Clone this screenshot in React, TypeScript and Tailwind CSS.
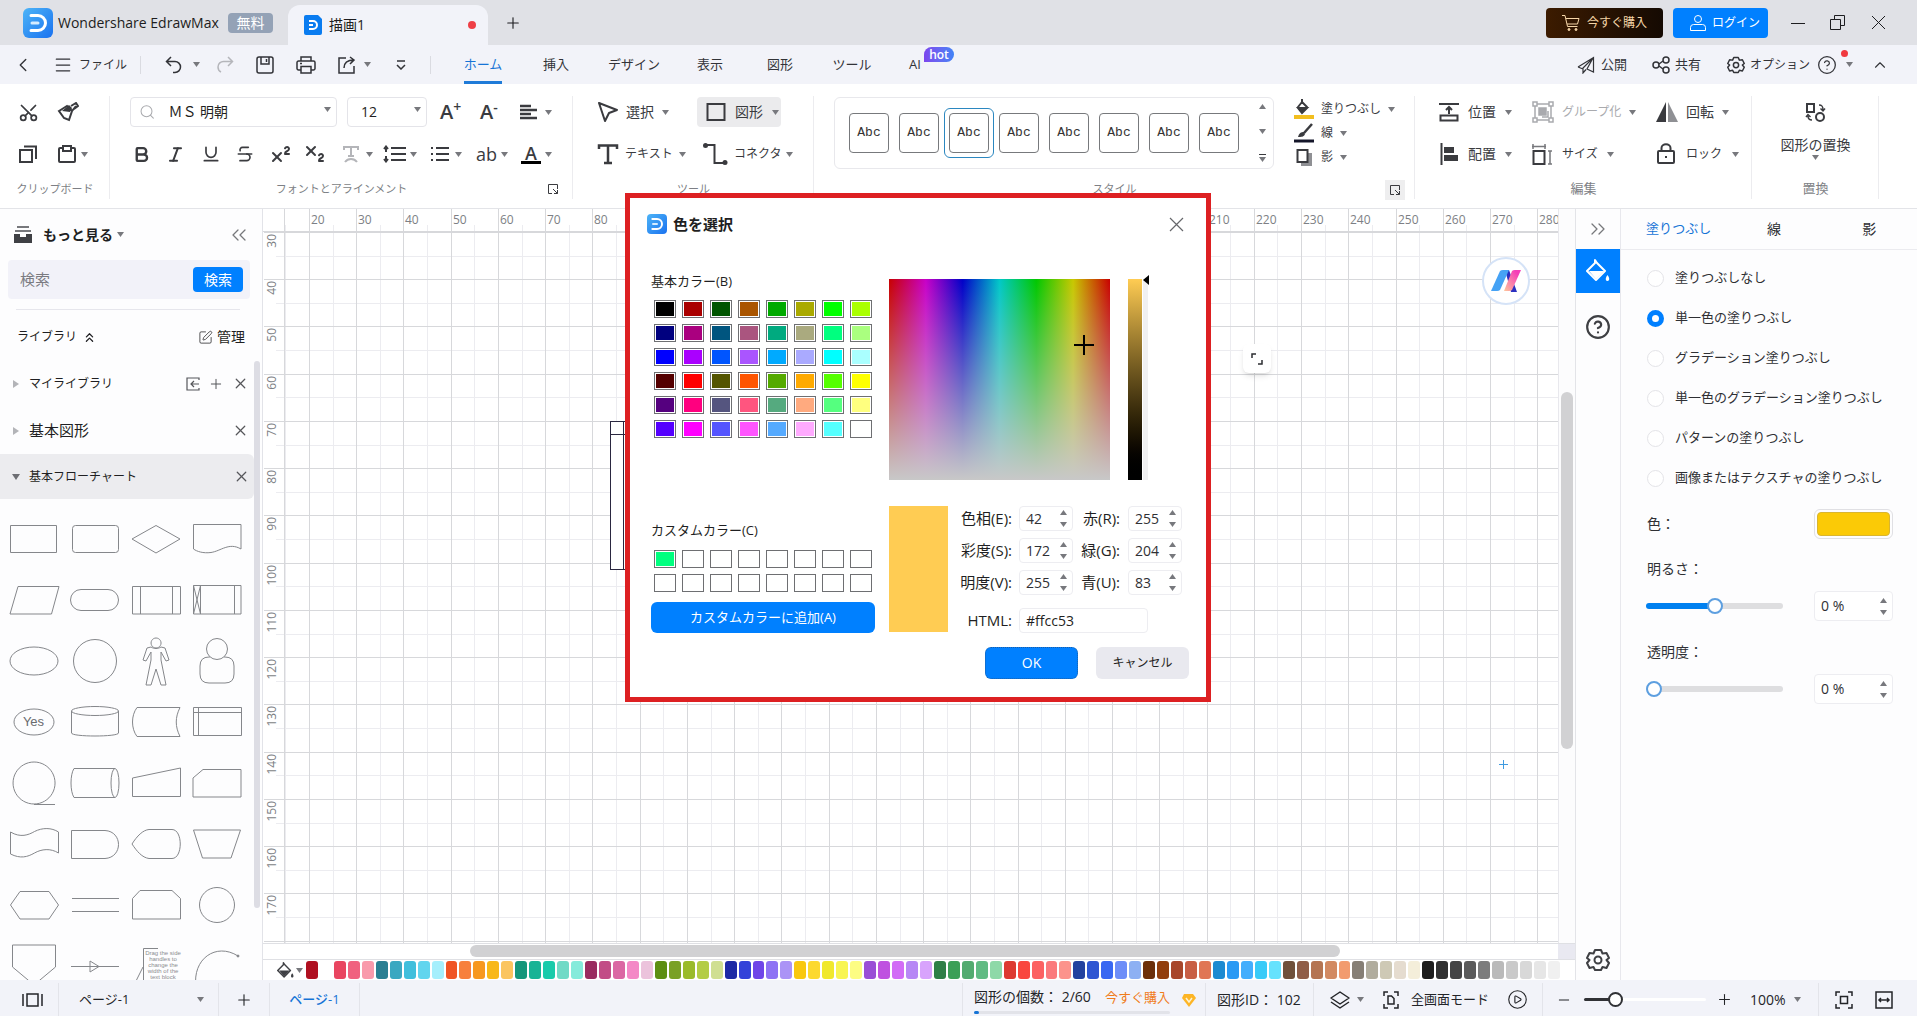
import React, { useState } from 'react';
import {
  Bold,
  Italic,
  Underline,
  Strikethrough,
  Superscript,
  Subscript,
  Scissors,
  Type,
  Minus,
  Plus,
  X,
  ChevronLeft,
  ChevronUp,
  ChevronsLeft,
  ChevronsRight,
  ChevronsUp,
  Menu,
  CircleHelp,
  CirclePlay,
  Search,
  SquarePen,
} from 'lucide-react';

const BASIC_COLORS = [
  '#000000', '#aa0000', '#005500', '#aa5500', '#00aa00', '#aaaa00', '#00ff00', '#aaff00',
  '#00007f', '#aa007f', '#00557f', '#aa557f', '#00aa7f', '#aaaa7f', '#00ff7f', '#aaff7f',
  '#0000ff', '#aa00ff', '#0055ff', '#aa55ff', '#00aaff', '#aaaaff', '#00ffff', '#aaffff',
  '#550000', '#ff0000', '#555500', '#ff5500', '#55aa00', '#ffaa00', '#55ff00', '#ffff00',
  '#55007f', '#ff007f', '#55557f', '#ff557f', '#55aa7f', '#ffaa7f', '#55ff7f', '#ffff7f',
  '#5500ff', '#ff00ff', '#5555ff', '#ff55ff', '#55aaff', '#ffaaff', '#55ffff', '#ffffff',
];

const CUSTOM_COLORS = ['#00ff7f', ...Array(15).fill('#ffffff')];

const PALETTE = [
  '#b01020', '#ffffff', '#e94560', '#f0627f', '#f99aab',
  '#2a7f92', '#3aa8c1', '#3fbfdc', '#62d5ee', '#a5effc',
  '#f05423', '#f7803c', '#f79820', '#f8b818', '#fbc55f',
  '#14977b', '#17b395', '#19cbaa', '#70dac6', '#85ebdb',
  '#992c60', '#c24c86', '#db67a3', '#f488c6', '#ecc3dc',
  '#5d8e12', '#7aa125', '#9abb2a', '#b3cd45', '#d0df91',
  '#1d2aa5', '#3342d9', '#6f45e8', '#8e72f4', '#ab93f6',
  '#f9c80e', '#fcd92e', '#f0e82c', '#f8f552', '#fdfd83',
  '#9a4fd6', '#bf52e0', '#d26cf6', '#b788f5', '#d8a3fc',
  '#2f8047', '#3c9f57', '#53ab6f', '#61bb83', '#8ed9a8',
  '#dd3a31', '#f9473e', '#fc6262', '#fb7a7c', '#fc938c',
  '#24429f', '#2f56d2', '#3867f2', '#6c8df8', '#8db0f3',
  '#6c2f09', '#923e0b', '#a8472a', '#c85f44', '#e07655',
  '#1d8ad1', '#2a9af4', '#44aefc', '#39cbf8', '#65e2fd',
  '#70503a', '#8f5d47', '#b57552', '#d28a62', '#f29b6e',
  '#867f75', '#b1ad9e', '#cec9b5', '#e5dccf', '#f4eeda',
  '#1c1c1c', '#303030', '#444444', '#5b5b5b', '#7c7c7c',
  '#bababa', '#cacaca', '#d8d8d8', '#e6e6e6', '#f0f0f0',
];

const FILL_MODES = [
  '塗りつぶしなし',
  '単一色の塗りつぶし',
  'グラデーション塗りつぶし',
  '単一色のグラデーション塗りつぶし',
  'パターンの塗りつぶし',
  '画像またはテクスチャの塗りつぶし',
];

interface IconProps {
  w?: number;
  h?: number;
  stroke?: number;
  children: React.ReactNode;
}

const Icon: React.FC<IconProps> = ({ w = 20, h = 20, stroke = 2, children }) => (
  <svg
    width={w}
    height={h}
    viewBox={`0 0 ${w} ${h}`}
    fill="none"
    stroke="currentColor"
    strokeWidth={stroke}
    className="shrink-0"
    aria-hidden="true"
  >
    {children}
  </svg>
);

const Caret = () => (
  <svg width="7" height="5" viewBox="0 0 7 5" className="shrink-0" aria-hidden="true">
    <path d="M0 0h7L3.500 5z" fill="#77787d" />
  </svg>
);

const CaretUp = () => (
  <svg width="7" height="5" viewBox="0 0 7 5" className="shrink-0" aria-hidden="true">
    <path d="M0 5h7L3.500 0z" fill="#77787d" />
  </svg>
);

const Logo = ({ size }: { size: number }) => (
  <svg width={size} height={size} viewBox="0 0 30 30" className="shrink-0" aria-hidden="true">
    <defs>
      <linearGradient id={`logo${size}`} x1="0" y1="0" x2="1" y2="1">
        <stop offset="0" stopColor="#4db4f7" />
        <stop offset="1" stopColor="#1a72f0" />
      </linearGradient>
    </defs>
    <rect width="30" height="30" rx="6" fill={`url(#logo${size})`} />
    <path d="M8 7.500h7a7.500 7.500 0 0 1 0 15H8" fill="none" stroke="#fff" strokeWidth="3" strokeLinecap="round" />
    <path d="M9 15h6" stroke="#d5ecff" strokeWidth="3" strokeLinecap="round" />
  </svg>
);

const Bucket = ({ size = 20 }: { size?: number }) => (
  <svg width={size} height={size} viewBox="0 0 24 24" className="shrink-0" aria-hidden="true">
    <path d="M9 1l2 3 8 8-9 9-9-9 8-8z" fill="none" stroke="currentColor" strokeWidth="2" strokeLinejoin="round" />
    <path d="M3 12h15l-8 8z" fill="currentColor" />
    <path d="M21.500 16c3 4 1.500 6 0 6s-3-2 0-6z" fill="currentColor" />
  </svg>
);

const Gear = ({ size }: { size: number }) => (
  <svg width={size} height={size} viewBox="0 0 24 24" fill="none" stroke="currentColor" strokeWidth="2" strokeLinejoin="round" className="shrink-0" aria-hidden="true">
    <path d="M9 2h6l1.500 3.500 4-.5 2.500 5-2.500 2 2.500 3-2.500 5-4-1L15 22H9l-1.500-3-4 1L1 15l2.500-3L1 10l2.500-5 4 .5z" />
    <circle cx="12" cy="12" r="3.500" />
  </svg>
);

const Launcher = () => (
  <Icon w={12} h={12} stroke={1}>
    <path d="M5 10.500H1.500v-9h9V6M6 6l4.500 4.500M10.500 7v3.500H7" />
  </Icon>
);

/* ---------- title + menu bars ---------- */

const TitleBar = () => (
  <header className="flex h-[45px] shrink-0 items-center bg-[#e0e1e6] text-[#1d1d20]">
    <div className="flex w-[288px] items-center pl-[23px]">
      <Logo size={30} />
      <span className="ml-[5px] w-[170px] whitespace-nowrap text-sm">Wondershare EdrawMax</span>
      <span className="flex h-5 w-[45px] items-center justify-center rounded bg-[#94a2b6] text-sm text-white">無料</span>
    </div>
    <div className="flex h-10 w-[200px] items-center self-end rounded-t-xl bg-[#f2f3f9] pl-4">
      <svg width="18" height="20" viewBox="0 0 18 20" aria-hidden="true">
        <path d="M2 0h12l4 4v14q0 2-2 2H2q-2 0-2-2V2q0-2 2-2z" fill="#0a7cf0" />
        <path d="M5 6h4a4 4 0 0 1 0 8H5M5 10h4" fill="none" stroke="#fff" strokeWidth="2" />
      </svg>
      <span className="ml-[7px] text-sm">描画1</span>
      <span className="ml-auto mr-3 h-2 w-2 rounded-full bg-[#ee3f46]" />
    </div>
    <button aria-label="新しいタブ" className="ml-4">
      <Plus size={18} strokeWidth={1.5} />
    </button>
    <button className="ml-auto flex h-[30px] w-[117px] items-center gap-[6px] rounded bg-gradient-to-r from-[#3c1b00] to-[#150a02] pl-[15px] text-xs text-[#f6d6a8]">
      <Icon stroke={1}>
        <path d="M1 2.500h3l2.500 11h10M5 5.500h13l-1.500 5.500H6" />
        <circle cx="8" cy="16.500" r="1" fill="currentColor" />
        <circle cx="15" cy="16.500" r="1" fill="currentColor" />
      </Icon>
      今すぐ購入
    </button>
    <button className="ml-[10px] flex h-[30px] w-[95px] items-center gap-[5px] rounded bg-[#0080ff] pl-4 text-xs text-white">
      <Icon w={18} h={18} stroke={1}>
        <circle cx="9" cy="5" r="3.500" />
        <path d="M1.500 16.500v-3a3 3 0 0 1 3-3h9a3 3 0 0 1 3 3v3z" />
      </Icon>
      ログイン
    </button>
    <div className="flex w-[149px] items-center pl-[22px]">
      <button aria-label="最小化" className="w-[39px]">
        <Icon w={16} h={16} stroke={1}><path d="M1 8.500h14" /></Icon>
      </button>
      <button aria-label="元に戻す" className="w-[42px]">
        <Icon w={17} h={17} stroke={1}><path d="M1.500 5.500h10v10h-10zM5.500 5V1.500h10v10H12" /></Icon>
      </button>
      <button aria-label="閉じる">
        <Icon w={15} h={15} stroke={1}><path d="M1 1l13 13M14 1L1 14" /></Icon>
      </button>
    </div>
  </header>
);

const MenuTab = ({ label, className, active }: { label: string; className: string; active?: boolean }) => (
  <button className={`flex h-full items-center justify-center ${className}`}>
    <span className={active ? 'flex h-full items-center border-b-[3px] border-[#1f7bd8] pt-[3px] text-[#1674d6]' : ''}>{label}</span>
  </button>
);

const MenuBar = () => (
  <nav className="flex h-[39px] shrink-0 items-center bg-[#f2f3f9] text-[13px] text-[#323338]">
    <button aria-label="戻る" className="w-[53px] pl-3">
      <ChevronLeft size={22} strokeWidth={1.5} />
    </button>
    <button className="flex w-[87px] items-center gap-[6px] text-xs">
      <Menu size={20} strokeWidth={1.5} />
      ファイル
    </button>
    <div className="flex h-[18px] w-[291px] items-center border-x border-[#dadbe1] pl-6">
      <button aria-label="元に戻す操作" className="flex w-[51px] items-center gap-[10px]">
        <Icon w={18} h={18} stroke={1.500}><path d="M6 1L1.500 5.500 6 10M2 5.500h8a5.500 5.500 0 0 1 0 11H8" /></Icon>
        <Caret />
      </button>
      <button aria-label="やり直し" className="w-10 text-[#b5b6bb]">
        <Icon w={18} h={18} stroke={1.500}><path d="M12 1l4.500 4.500L12 10M16 5.500H8a5.500 5.500 0 0 0-6 5.500c0 2 1 4 3 5" /></Icon>
      </button>
      <button aria-label="保存" className="w-10">
        <Icon w={18} h={18} stroke={1.500}>
          <rect x="1" y="1" width="16" height="16" rx="2" />
          <path d="M5 1v7h8V1M10.500 3v3" />
        </Icon>
      </button>
      <button aria-label="印刷" className="w-[42px]">
        <Icon w={20} h={18} stroke={1.500}>
          <path d="M5 5V1h10v4M5 14H2.500A1.500 1.500 0 0 1 1 12.500v-6A1.500 1.500 0 0 1 2.500 5h15A1.500 1.500 0 0 1 19 6.500v6a1.500 1.500 0 0 1-1.500 1.500H15M5 10.500h10V17H5zM4 7.500h2" />
        </Icon>
      </button>
      <button aria-label="エクスポート" className="flex w-[58px] items-center gap-2">
        <Icon w={18} h={18} stroke={1.500}><path d="M8 2H1v15h15v-7M6 12c0-5 3-8 10-8M12 1l4 3-4 4" /></Icon>
        <Caret />
      </button>
      <button aria-label="クイックアクセス">
        <Icon w={10} h={10} stroke={1.500}><path d="M1 1h8M1 5l4 4 4-4" /></Icon>
      </button>
    </div>
    <div className="flex h-full items-center pl-[19px]">
      <MenuTab label="ホーム" className="w-[66px]" active />
      <MenuTab label="挿入" className="w-20" />
      <MenuTab label="デザイン" className="w-[76px]" />
      <MenuTab label="表示" className="w-[76px]" />
      <MenuTab label="図形" className="w-16" />
      <MenuTab label="ツール" className="w-20" />
      <div className="relative h-full">
        <MenuTab label="AI" className="w-[46px]" />
        <span className="absolute left-8 top-[2px] flex h-[15px] w-[30px] items-center justify-center rounded-full rounded-bl-none bg-gradient-to-r from-[#7b45ee] to-[#3f83f6] text-xs font-semibold leading-none text-white">hot</span>
      </div>
    </div>
    <div className="ml-auto flex w-[340px] items-center">
      <button className="flex w-[75px] items-center gap-[6px]">
        <Icon w={18} h={18} stroke={1.200}><path d="M1 11L16.500 1.500V16L10 13 16 2 6 12v5l3-3.500M1 11l5 2" /></Icon>
        公開
      </button>
      <button className="flex w-[75px] items-center gap-[5px]">
        <Icon w={18} h={18} stroke={1.500}>
          <circle cx="4" cy="9" r="3" /><circle cx="14" cy="4" r="3" /><circle cx="14" cy="14" r="3" />
          <path d="M7 8l4-3M7 10l4 3" />
        </Icon>
        共有
      </button>
      <button className="flex w-[90px] items-center gap-[5px] text-xs">
        <Gear size={18} />
        オプション
      </button>
      <button aria-label="ヘルプ" className="relative flex w-[54px] items-center gap-[9px]">
        <CircleHelp size={20} strokeWidth={1.5} />
        <Caret />
        <span className="absolute left-6 top-[-5px] h-[7px] w-[7px] rounded-full bg-[#f0393f]" />
      </button>
      <button aria-label="リボンを閉じる">
        <ChevronUp size={18} strokeWidth={1.5} />
      </button>
    </div>
  </nav>
);

/* ---------- ribbon ---------- */

interface GroupProps {
  label: string;
  className: string;
  labelClass?: string;
  launcher?: React.ReactNode;
  children: React.ReactNode;
}

const Group: React.FC<GroupProps> = ({ label, className, labelClass = 'text-[11px]', launcher, children }) => (
  <section className={`relative flex shrink-0 flex-col ${className}`}>
    <div className="h-[84px]">{children}</div>
    <div className={`flex h-[26px] items-center justify-center text-[#7d7f85] ${labelClass}`}>{label}</div>
    {launcher}
    <span className="absolute right-0 top-1 h-[103px] w-px bg-[#ececef]" />
  </section>
);

const StyleCard = ({ active }: { active?: boolean }) => (
  <button className={`flex h-[50px] w-[50px] items-center justify-center rounded-md border ${active ? 'border-[#2b87c0]' : 'border-transparent'}`}>
    <span className="flex h-10 w-10 items-center justify-center rounded-[4px] border border-[#77797c] text-[13px] font-normal text-[#333] [font-family:'Liberation_Mono',monospace]">Abc</span>
  </button>
);

const Ribbon = () => (
  <div className="flex h-[125px] shrink-0 border-b border-[#e3e4e8] bg-white pt-2 text-[#3a3b3f]">
    <Group label="クリップボード" className="w-[110px]">
      <div className="flex h-10 items-center pl-[18px]">
        <button aria-label="切り取り" className="w-[39px]">
          <Scissors size={21} strokeWidth={2} className="-rotate-90" />
        </button>
        <button aria-label="書式のコピー">
          <Icon w={22} h={20}>
            <path d="M2 9l8-5 5 5-3 9-5-2zM11 5l4 4 4-5M14 4l5-3 2 3-4 3" />
            <path d="M5 9l8 1 2-4-3-3z" fill="currentColor" stroke="none" />
          </Icon>
        </button>
      </div>
      <div className="flex h-11 items-center pl-[18px]">
        <button aria-label="コピー" className="w-10">
          <Icon><path d="M2 6h12v12H2zM6 2.500h12V15" /></Icon>
        </button>
        <button aria-label="貼り付け" className="flex items-center gap-[5px]">
          <Icon w={18} h={20}>
            <rect x="1" y="4" width="16" height="14" rx="1" />
            <path d="M5 2h8v5H5z" fill="#fff" />
          </Icon>
          <Caret />
        </button>
      </div>
    </Group>

    <Group
      label="フォントとアラインメント"
      className="w-[463px]"
      launcher={<button aria-label="フォント設定" className="absolute bottom-[13px] right-[14px]"><Launcher /></button>}
    >
      <div className="flex h-10 items-center pl-5">
        <label className="relative flex h-[30px] w-[207px] items-center rounded border border-[#e4e4e9] pl-2">
          <Search size={18} strokeWidth={1.5} className="text-[#a9aaae]" />
          <select aria-label="フォント" className="w-full appearance-none bg-transparent pl-[13px] text-sm text-[#1f1f22] outline-none">
            <option>ＭＳ 明朝</option>
          </select>
          <span className="pointer-events-none absolute right-[5px] top-[9px]"><Caret /></span>
        </label>
        <label className="relative ml-[10px] flex h-[30px] w-20 items-center rounded border border-[#e4e4e9]">
          <select aria-label="フォントサイズ" className="w-full appearance-none bg-transparent pl-[13px] text-sm text-[#1f1f22] outline-none">
            <option>12</option>
          </select>
          <span className="pointer-events-none absolute right-[5px] top-[9px]"><Caret /></span>
        </label>
        <button aria-label="文字を拡大" className="ml-[13px] flex w-10 items-start text-xl font-semibold leading-5">
          A<span className="text-sm leading-[10px]">+</span>
        </button>
        <button aria-label="文字を縮小" className="flex w-10 items-start text-xl font-semibold leading-5">
          A<span className="text-sm leading-[10px]">-</span>
        </button>
        <button aria-label="配置設定" className="flex items-center gap-2">
          <Icon w={17} h={16} stroke={2.500}><path d="M0 2h11M0 6h17M0 10h11M0 14h17" /></Icon>
          <Caret />
        </button>
      </div>
      <div className="flex h-11 items-center pl-[22px]">
        <button aria-label="太字" className="w-[34px]"><Bold size={19} strokeWidth={3} /></button>
        <button aria-label="斜体" className="w-[35px]"><Italic size={19} strokeWidth={2.5} /></button>
        <button aria-label="下線" className="w-[34px]"><Underline size={20} strokeWidth={2} /></button>
        <button aria-label="取り消し線" className="w-[34px]"><Strikethrough size={20} strokeWidth={2} /></button>
        <button aria-label="上付き" className="w-[34px]"><Superscript size={24} strokeWidth={2} /></button>
        <button aria-label="下付き" className="w-[34px]"><Subscript size={24} strokeWidth={2} /></button>
        <button aria-label="文字効果" className="flex w-[43px] items-center gap-[7px] pl-[6px] text-[#b4b5b9]">
          <Icon w={16} h={18}><path d="M1 5V2h14v3M8 2v9M5 11h6M2 17c3-4 9-4 12 0" /></Icon>
          <Caret />
        </button>
        <button aria-label="行間" className="flex w-12 items-center gap-1 pl-[3px]">
          <Icon w={23} h={18}><path d="M8 3h15M8 9h15M8 15h15M3 1v6M1 4l2-2.500L5 4M3 17v-6M1 14l2 2.500L5 14" /></Icon>
          <Caret />
        </button>
        <button aria-label="箇条書き" className="flex w-[45px] items-center gap-[6px] pl-[3px]">
          <Icon w={18} h={18}><path d="M5 3h13M5 9h13M5 15h13M0 3h2M0 9h2M0 15h2" /></Icon>
          <Caret />
        </button>
        <button aria-label="文字間隔" className="flex w-[45px] items-center gap-1 pl-[3px] text-lg font-medium leading-5">
          ab
          <Caret />
        </button>
        <button aria-label="文字の色" className="flex items-center gap-1 pl-[3px]">
          <span className="flex h-5 w-5 items-center justify-center border-b-[3px] border-black text-lg font-semibold leading-4">A</span>
          <Caret />
        </button>
      </div>
    </Group>

    <Group label="ツール" className="w-[241px]">
      <div className="flex h-10 items-center pl-6">
        <button className="flex w-[100px] items-center gap-2 text-sm">
          <Icon w={21} h={22}><path d="M2 2l18 7-8 3-4 8z" strokeLinejoin="round" /></Icon>
          選択
          <Caret />
        </button>
        <button className="flex h-[30px] w-[84px] items-center gap-[9px] rounded bg-[#ebebed] pl-[9px] text-sm">
          <Icon><path d="M1.500 2h17v16h-17z" /></Icon>
          図形
          <Caret />
        </button>
      </div>
      <div className="flex h-11 items-center pl-6">
        <button className="flex w-[106px] items-center gap-[6px] text-xs">
          <Icon w={22} h={22} stroke={2.500}><path d="M2 6V2.500h18V6M11 2v18M7 20h8" /></Icon>
          テキスト
          <Caret />
        </button>
        <button className="flex items-center gap-1 text-xs">
          <Icon w={27} h={22}>
            <path d="M3 2h8.500v18H20" />
            <circle cx="2.500" cy="2.500" r="2.500" fill="currentColor" stroke="none" />
            <circle cx="22" cy="19.500" r="2.500" fill="currentColor" stroke="none" />
          </Icon>
          コネクタ
          <Caret />
        </button>
      </div>
    </Group>

    <Group
      label="スタイル"
      className="w-[601px]"
      launcher={<button aria-label="スタイル設定" className="absolute bottom-[8px] right-[10px] flex h-5 w-5 items-center justify-center bg-[#eeeeef]"><Launcher /></button>}
    >
      <div className="flex pl-5 pt-[5px]">
        <div className="flex h-[72px] w-[440px] items-center rounded-md border border-[#e8e8ec] pl-[9px]">
          {Array.from({ length: 8 }, (_, i) => <StyleCard key={i} active={i === 2} />)}
          <div className="ml-[15px] flex flex-col items-center gap-5">
            <button aria-label="前のスタイル"><CaretUp /></button>
            <button aria-label="次のスタイル"><Caret /></button>
            <button aria-label="すべてのスタイル">
              <Icon w={7} h={8} stroke={1}><path d="M0 .5h7" /><path d="M0 3h7L3.500 8z" fill="#77787d" stroke="none" /></Icon>
            </button>
          </div>
        </div>
        <div className="flex flex-col gap-1 pl-5 pt-[2px] text-xs">
          <button className="flex h-5 items-center gap-[7px]">
            <Icon>
              <path d="M8 3l5 5-5 5-4-5z" strokeLinejoin="round" /><path d="M8 0v4" />
              <path d="M4 9h9l-5 5z" fill="currentColor" />
              <path d="M0 18h20" stroke="#f2be1e" strokeWidth="4" />
            </Icon>
            塗りつぶし
            <Caret />
          </button>
          <button className="flex h-5 items-center gap-[7px]">
            <Icon>
              <path d="M18 1l-8 9" strokeWidth="2.500" />
              <path d="M4 14c1-4 3-5 6-5l1 2c-1 3-4 3-7 3z" fill="currentColor" stroke="none" />
              <path d="M0 18h20" stroke="#15162a" strokeWidth="3" />
            </Icon>
            線
            <Caret />
          </button>
          <button className="flex h-5 items-center gap-[7px]">
            <Icon>
              <path d="M7 6h11v13H7z" fill="#8f9094" stroke="none" />
              <path d="M3.500 3h10v12h-10z" fill="#fff" />
            </Icon>
            影
            <Caret />
          </button>
        </div>
      </div>
    </Group>

    <Group label="編集" className="w-[337px]" labelClass="text-[13px]">
      <div className="flex h-10 items-center pl-6 text-sm">
        <button className="flex w-[93px] items-center gap-[9px]">
          <Icon><path d="M0 2h20M10 12V5M7 8l3-3 3 3M1.500 13.500h17v5h-17z" /></Icon>
          位置
          <Caret />
        </button>
        <button className="flex w-[124px] items-center gap-2 text-xs text-[#a9aaae]">
          <Icon w={22} h={22} stroke={1.500}>
            <path d="M3 3h16v16H3z" /><path d="M1 1h4v4H1zM17 1h4v4h-4zM1 17h4v4H1zM17 17h4v4h-4z" fill="#fff" />
            <path d="M7 7h7v7H7z" fill="currentColor" /><path d="M10 16h6v-6" />
          </Icon>
          グループ化
          <Caret />
        </button>
        <button className="flex items-center gap-2">
          <Icon w={22} h={20}>
            <path d="M10 0v20H0z" fill="currentColor" stroke="none" />
            <path d="M12 0v20h10z" fill="#8f9094" stroke="none" />
          </Icon>
          回転
          <Caret />
        </button>
      </div>
      <div className="flex h-11 items-center pl-6 text-sm">
        <button className="flex w-[93px] items-center gap-[9px]">
          <Icon h={22}>
            <path d="M2.500 0v22" />
            <path d="M6 5h8v4H6zM6 13h12v4H6z" fill="currentColor" />
          </Icon>
          配置
          <Caret />
        </button>
        <button className="flex w-[124px] items-center gap-[9px] text-xs">
          <Icon w={21} h={21}>
            <path d="M1.500 7h11v13h-11z" /><path d="M0 2.500h14M1 0v5M13 0v5M18 7v13M16 7h4M16 20h4" stroke="#77787c" strokeWidth="1.500" />
          </Icon>
          サイズ
          <Caret />
        </button>
        <button className="flex items-center gap-[10px] text-xs">
          <Icon h={22}>
            <rect x="2" y="8" width="16" height="12" rx="1" />
            <path d="M5.500 8V5c0-5 9-5 9 0v3" /><path d="M10 13v2" />
          </Icon>
          ロック
          <Caret />
        </button>
      </div>
    </Group>

    <Group label="置換" className="w-[127px]" labelClass="text-[13px]">
      <button className="flex w-full flex-col items-center pt-[10px] text-sm leading-5">
        <Icon w={21} h={21}>
          <path d="M2 2h7v8H2z" /><circle cx="15" cy="15" r="4" />
          <path d="M14 3c3 0 4 1 4 5M15.500 6.500L18 9l2-2.500M7 18c-3 0-4-1-4-4M1 15l2-2.500L5.500 15" strokeWidth="1.500" />
        </Icon>
        <span className="mt-3">図形の置換</span>
        <Caret />
      </button>
    </Group>
  </div>
);

/* ---------- shape library ---------- */

const SHAPES: React.ReactNode[] = [
  <path d="M7.500 17.500h46v27h-46z" />,
  <rect x="8.500" y="17.500" width="46" height="27" rx="3" />,
  <path d="M31 17.500l24 13.500-24 14L7 31z" />,
  <path d="M7.500 16.500h47.500V41c-12-7-20 2-30 3.500-8 1-14-1-17.500-3.500z" />,
  <path d="M15 17.500h41L48.500 45H7z" />,
  <rect x="6.500" y="20.500" width="48" height="21" rx="10.500" />,
  <path d="M7.500 17.500h48V45h-48zM15.500 17.500V45M47.500 17.500V45" />,
  <path d="M7.500 16.500h47.500V45H7.500zM14.500 16.500V45M48.500 16.500V45M7.500 16.500l7 28.500M14.500 16.500L7.500 45" />,
  <ellipse cx="31" cy="31" rx="24" ry="14" />,
  <circle cx="31" cy="31" r="21.500" />,
  <path d="M31 8a5 5 0 1 0 .1 0zM26 17l-4 1-4 12 3 1 5-9v8l-5 25h5l5-16 5 16h5l-5-25v-8l5 9 3-1-4-12-4-1c-3 2-7 2-10 0z" />,
  <g><circle cx="31" cy="19" r="10.500" /><path d="M24 27h-1q-9 0-9 9v8q0 9 9 9h16q9 0 9-9v-8q0-9-9-9h-1" /></g>,
  <g><ellipse cx="31" cy="31" rx="20" ry="13" /></g>,
  <g><path d="M7.500 20v22c0 4 47 4 47 0V20" /><ellipse cx="31" cy="20" rx="23.500" ry="4.500" /></g>,
  <path d="M12 16.500h43c-5 10-5 19 0 29H12c-6-8-6-21 0-29z" />,
  <path d="M7.500 16.500h48v28h-48zM12.500 16.500v28M7.500 21.500h48" />,
  <path d="M31 10a21 21 0 1 0 .1 0zM31 52.500h21" />,
  <g><path d="M51 16.500H10c-4 6-4 23 0 29h41" /><ellipse cx="51" cy="31" rx="4" ry="14.500" /></g>,
  <path d="M7.500 26l48-10v28.500h-48z" />,
  <path d="M17 17.500h38V45H7V26z" />,
  <path d="M7.500 19c10 6 18 3 24-.5 8-4 17-4 24 .5v21c-8-5-17-4-24 0s-14 6-24 1z" />,
  <path d="M7.500 17.500H41c18 1 18 27 0 28H7.500z" />,
  <path d="M7 31c5-8 11-14 17-14.500h23c11 0 11 29 0 29H24c-7-1-12-7-17-14.500z" />,
  <path d="M7.500 17h47L45 45H16.500z" />,
  <path d="M17 17.500h29L55.500 31 46 45H17L7.500 31z" />,
  <path d="M8 24.500h47M8 37.500h47" />,
  <path d="M15 16.500h32l8.500 8V45h-48V24.500z" />,
  <circle cx="31" cy="31" r="17.500" />,
  <path d="M9.500 10h43v22L31 50 9.500 32z" />,
  <path d="M7 31.500h48M26 26v11l9-5.500z" />,
  <path d="M33 13.500H18.500V50M18 32L9 50" />,
  <g><path d="M10 52c-4-28 20-45 42-31" /><circle cx="52" cy="21" r="1" fill="#808286" /></g>,
];

const LibraryRow = ({ label, open, className = 'text-xs', children }: { label: string; open?: boolean; className?: string; children?: React.ReactNode }) => (
  <div className={`flex h-[47px] items-center pl-3 ${open ? 'w-[254px]' : ''}`}>
    <button className={`flex items-center gap-[9px] text-[#1f1f22] ${className}`}>
      <svg width="8" height="8" viewBox="0 0 8 8" aria-hidden="true">
        {open ? <path d="M0 1h8L4 7z" fill="#6d6e73" /> : <path d="M1 0v8l6-4z" fill="#b3b4b8" />}
      </svg>
      {label}
    </button>
    <div className="ml-auto flex w-[66px] items-center justify-end gap-2 text-[#55565a]">
      {children}
      <button aria-label={`${label}を閉じる`}><X size={17} strokeWidth={1.7} /></button>
    </div>
  </div>
);

const ShapeLibrary = () => (
  <aside className="relative flex w-[263px] shrink-0 flex-col overflow-hidden border-r border-[#e2e3e8] bg-[#fdfdfe]">
    <div className="flex h-[51px] shrink-0 items-center pl-[14px] pr-[11px]">
      <svg width="18" height="19" viewBox="0 0 18 19" aria-hidden="true">
        <path d="M3 1h12v2H3zM1 5h16v2H1z" fill="#77787c" />
        <path d="M0 9h6v3h6V9h6v9H0z" fill="#3f4044" />
      </svg>
      <button className="ml-[11px] flex items-center gap-1 text-sm font-bold text-[#1f1f22]">
        もっと見る
        <Caret />
      </button>
      <button aria-label="パネルを閉じる" className="ml-auto text-[#77787c]"><ChevronsLeft size={24} strokeWidth={1.3} /></button>
    </div>
    <form className="ml-2 flex h-[39px] w-[242px] shrink-0 items-center rounded bg-[#f2f2f9] pr-[7px]">
      <input aria-label="検索キーワード" placeholder="検索" className="min-w-0 flex-1 bg-transparent pl-3 text-[15px] outline-none placeholder:text-[#7a7b81]" />
      <button type="button" className="h-[25px] w-[50px] rounded bg-[#0080ff] text-sm text-white">検索</button>
    </form>
    <div className="mx-4 mt-[10px] w-56 shrink-0 border-t border-[#e6e6ec]" />
    <div className="flex h-[50px] shrink-0 items-center pl-[17px] pt-1">
      <button className="flex items-center gap-[5px] text-xs text-[#1f1f22]">
        ライブラリ
        <ChevronsUp size={15} strokeWidth={2} />
      </button>
      <button className="ml-auto mr-[17px] flex items-center gap-1 text-sm text-[#1f1f22]">
        <SquarePen size={15} strokeWidth={1.2} />
        管理
      </button>
    </div>
    <div className="mr-[13px] shrink-0">
      <LibraryRow label="マイライブラリ">
        <button aria-label="インポート">
          <Icon w={14} h={14} stroke={1.200}><path d="M13 3V1H1v12h12v-2M13 7H5M8 4L5 7l3 3" /></Icon>
        </button>
        <button aria-label="追加"><Plus size={16} strokeWidth={1.5} /></button>
      </LibraryRow>
      <LibraryRow label="基本図形" className="text-[15px]" />
    </div>
    <div className="w-[254px] shrink-0 rounded-r-md bg-[#ececef] [&>div]:h-[45px] [&>div]:pr-1">
      <LibraryRow label="基本フローチャート" open />
    </div>
    <div className="grid w-[247px] shrink-0 grid-cols-4 pl-[3px] pt-[9px]">
      {SHAPES.map((shape, i) => (
        <button key={i} aria-label={`図形 ${i + 1}`} className="relative flex h-[61px] w-[61px] items-center justify-center">
          <svg width="61" height="61" viewBox="0 0 61 61" fill="none" stroke="#85878b" strokeWidth="1" aria-hidden="true">
            {shape}
          </svg>
          {i === 12 && <span className="absolute inset-0 flex items-center justify-center text-[13px] text-[#6a6b6f] [font-family:'Liberation_Sans',sans-serif]">Yes</span>}
          {i === 30 && <span className="absolute left-5 top-[15px] w-9 text-center text-[6px] leading-[6px] text-[#8c8d91] [font-family:'Liberation_Sans',sans-serif]">Drag the side handles to change the width of the text block</span>}
        </button>
      ))}
    </div>
    <span className="absolute right-[2px] top-[152px] h-[547px] w-[6px] rounded-full bg-[#dddde4]" />
  </aside>
);

/* ---------- canvas ---------- */

const UNIT = 4.724;
const gridX = (v: number) => Math.round(46 + (v - 20) * UNIT);
const gridY = (v: number) => Math.round(23 + (v - 30) * UNIT);
const steps = (from: number, to: number, by: number) =>
  Array.from({ length: Math.floor((to - from) / by) + 1 }, (_, i) => from + i * by);

const Canvas = () => (
  <div className="relative min-h-0 flex-1 overflow-hidden bg-white">
    <svg width="100%" height="100%" className="absolute inset-0" aria-hidden="true">
      <g fill="#ececf0" shapeRendering="crispEdges">
        {steps(15, 400, 10).map((v) => <rect key={v} x={gridX(v)} y="16" width="1" height="3000" />)}
        {steps(35, 400, 10).map((v) => <rect key={v} x="13" y={gridY(v)} width="4000" height="1" />)}
      </g>
      <g fill="#d7d8db" shapeRendering="crispEdges">
        {steps(20, 400, 10).map((v) => <rect key={v} x={gridX(v)} y="0" width="1" height="3000" />)}
        {steps(30, 400, 10).map((v) => <rect key={v} x="1" y={gridY(v)} width="4000" height="1" />)}
        <rect x="21" y="0" width="1" height="3000" />
        <rect x="0" y="22" width="4000" height="1" />
      </g>
      <g fill="#7d7f85" className="text-xs [font-family:'Open_Sans',sans-serif]">
        {steps(20, 280, 10).map((v) => <text key={v} x={gridX(v) + 2} y="15">{v}</text>)}
        {steps(30, 170, 10).map((v) => (
          <text key={v} textAnchor="end" transform={`translate(13 ${gridY(v) + 2}) rotate(-90)`}>{v}</text>
        ))}
      </g>
      <g fill="#fff" stroke="#2a2740" shapeRendering="crispEdges">
        <path d="M347.500 212.500h200v148h-200zM360.500 212.500v148M347.500 225.500h200" />
      </g>
      <path d="M1236 555.500h9M1240.500 551v9" stroke="#3f9be0" />
    </svg>
    <button aria-label="展開" className="absolute left-[980px] top-[135px] flex h-[29px] w-7 items-center justify-center rounded-md bg-white text-[#2d2e32] shadow-md">
      <Icon w={12} h={12} stroke={1.500}><path d="M1 5V1h4M11 7v4H7" /></Icon>
    </button>
    <button aria-label="AIアシスタント" className="absolute right-[28px] top-12 flex h-12 w-12 items-center justify-center rounded-full border-2 border-[#d5e3f7] bg-white">
      <svg width="30" height="22" viewBox="0 0 30 22" aria-hidden="true">
        <defs>
          <linearGradient id="aiPink" x1="1" y1="0" x2="0" y2="1">
            <stop offset="0.2" stopColor="#f53fb8" />
            <stop offset="1" stopColor="#ffc79a" />
          </linearGradient>
        </defs>
        <path d="M14 0h4l8 22h-6z" fill="#2a2fc0" />
        <path d="M9 1q1-1 3-1h6l-9 20q-1 1-3 1H0z" fill="#45a2f5" />
        <path d="M21 1q1-1 3-1h6l-9 20q-1 1-3 1h-5z" fill="url(#aiPink)" />
      </svg>
    </button>
  </div>
);

const Workspace = () => (
  <main className="flex min-w-0 flex-1 flex-col">
    <div className="flex min-h-0 flex-1">
      <Canvas />
      <div className="w-[17px] border-l border-[#e8e8ed] bg-[#fcfcfd] pt-[183px]">
        <div className="mx-auto h-[357px] w-3 rounded-full bg-[#d1d1d3]" />
      </div>
    </div>
    <div className="flex h-[17px] border-y border-[#dfe0e4]">
      <div className="flex-1 pl-[207px] pt-px">
        <div className="h-3 w-[870px] rounded-full bg-[#d1d1d3]" />
      </div>
      <div className="w-[17px] bg-[#e9e9f1]" />
    </div>
    <div className="flex h-5 items-center bg-white pr-[15px]">
      <button aria-label="塗りつぶしの色" className="flex w-[43px] items-center gap-[2px] pl-[14px] text-[#3f4044]">
        <Bucket size={17} />
        <Caret />
      </button>
      <div className="flex flex-1 gap-[2px]">
        {PALETTE.map((color, i) => (
          <button key={i} aria-label={color} className="h-[18px] flex-1 rounded-[3px]" style={{ background: color }} />
        ))}
      </div>
    </div>
  </main>
);

/* ---------- properties ---------- */

const Spinner = ({ id, label, value, className }: { id?: string; label: string; value: string; className: string }) => (
  <span className={`flex items-center rounded border border-[#ededf1] bg-white ${className}`}>
    <input id={id} aria-label={id ? undefined : label} defaultValue={value} className="w-0 min-w-0 flex-1 bg-transparent pl-[6px] text-sm text-[#2f3034] outline-none" />
    <span className="flex flex-col gap-[7px] pr-[5px]">
      <button aria-label={`${label}を増やす`}><CaretUp /></button>
      <button aria-label={`${label}を減らす`}><Caret /></button>
    </span>
  </span>
);

const RANGE =
  'h-[6px] w-[137px] appearance-none rounded-full [&::-webkit-slider-thumb]:h-4 [&::-webkit-slider-thumb]:w-4 [&::-webkit-slider-thumb]:appearance-none [&::-webkit-slider-thumb]:rounded-full [&::-webkit-slider-thumb]:border-2 [&::-webkit-slider-thumb]:border-[#5d9fe0] [&::-webkit-slider-thumb]:bg-white';

const Properties = () => {
  const [mode, setMode] = useState(1);

  return (
    <aside className="flex shrink-0 border-l border-[#e3e4e8] bg-[#fdfdfe]">
      <div className="flex w-11 flex-col items-center text-[#3f4044]">
        <button aria-label="パネルを閉じる" className="flex h-10 items-center text-[#77787c]"><ChevronsRight size={24} strokeWidth={1.3} /></button>
        <button aria-label="塗りつぶし" className="flex h-11 w-full items-center justify-center bg-[#0080ff] text-white"><Bucket size={24} /></button>
        <button aria-label="ヘルプ" className="mt-[21px]"><CircleHelp size={26} strokeWidth={2} /></button>
        <button aria-label="設定" className="mb-2 mt-auto"><Gear size={24} /></button>
      </div>
      <div className="w-[297px] border-l border-[#e8e8ed] text-[#2f3034]">
        <div className="grid h-[41px] grid-cols-3 border-b border-[#ebebef] pl-[10px] text-[13px]">
          <button className="text-[#1674d6]">塗りつぶし</button>
          <button className="text-sm">線</button>
          <button className="text-sm">影</button>
        </div>
        <fieldset className="pl-[26px] pt-2">
          {FILL_MODES.map((name, i) => (
            <label key={name} className="flex h-10 items-center gap-[11px] text-[13px]">
              <input
                type="radio"
                name="fill"
                checked={mode === i}
                onChange={() => setMode(i)}
                className="h-[17px] w-[17px] appearance-none rounded-full border border-[#e4e4e8] bg-white checked:border-[5px] checked:border-[#0080ff]"
              />
              {name}
            </label>
          ))}
        </fieldset>
        <div className="flex h-[52px] items-center pl-[26px] pr-6 text-sm">
          <span>色：</span>
          <button aria-label="色" className="ml-auto h-[30px] w-[79px] rounded-md border border-[#e0e0e4] p-[2px]">
            <span className="block h-full rounded border border-[#d9b530] bg-[#fbca06]" />
          </button>
        </div>
        <label htmlFor="brightness" className="flex h-[38px] items-center pl-[26px] text-sm">明るさ：</label>
        <div className="flex h-9 items-center pl-[25px] pr-6">
          <input id="brightness" type="range" defaultValue={50} className={`${RANGE} bg-[linear-gradient(to_right,#0080f0_50%,#dedee0_50%)]`} />
          <Spinner label="明るさの値" value="0 %" className="ml-auto h-[30px] w-[79px]" />
        </div>
        <label htmlFor="opacity" className="mt-[9px] flex h-[38px] items-center pl-[26px] text-sm">透明度：</label>
        <div className="flex h-9 items-center pl-[25px] pr-6">
          <input id="opacity" type="range" defaultValue={0} className={`${RANGE} bg-[#dedee0]`} />
          <Spinner label="透明度の値" value="0 %" className="ml-auto h-[30px] w-[79px]" />
        </div>
      </div>
    </aside>
  );
};

/* ---------- status bar ---------- */

const CELL = 'flex h-full items-center border-l border-[#e3e4ea]';

const StatusBar = () => (
  <footer className="flex h-9 shrink-0 items-center bg-[#f2f3f9] pt-[3px] text-sm text-[#232428]">
    <button aria-label="ページ一覧" className="w-[58px] pl-[22px]">
      <Icon w={21} h={14} stroke={1.500}><path d="M1 1v12M20 1v12M5 1h11v12H5z" /></Icon>
    </button>
    <label className={`${CELL} relative w-40`}>
      <select aria-label="ページ" className="w-full appearance-none bg-transparent pl-5 text-[13px] outline-none">
        <option>ページ-1</option>
      </select>
      <span className="pointer-events-none absolute right-[14px] top-[14px]"><Caret /></span>
    </label>
    <button aria-label="ページを追加" className={`${CELL} w-[51px] justify-center`}><Plus size={18} strokeWidth={1.5} /></button>
    <button className={`${CELL} w-[91px] justify-center border-r text-[13px] font-medium text-[#1674d6]`}>ページ-1</button>

    <div className="ml-auto flex h-full">
      <div className={`${CELL} w-[243px] pl-[11px]`}>
        <div>
          <div className="flex h-6 w-[196px] items-center justify-between whitespace-nowrap">
            <span>図形の個数： 2/60</span>
            <a href="#" className="text-[13px] text-[#f07c1c]">今すぐ購入</a>
          </div>
          <div className="mt-[2px] h-[3px] rounded-full bg-[#e2e3e9]">
            <div className="h-[3px] w-[5px] rounded-full bg-[#1674d6]" />
          </div>
        </div>
        <Icon w={28} h={16}>
          <path d="M14 2h9l3 4-7 9-7-9z" fill="#fdb526" stroke="none" />
          <path d="M16 6l3 4 3-4" stroke="#fff3d0" strokeWidth="1.500" />
        </Icon>
      </div>
      <div className={`${CELL} w-[108px] whitespace-nowrap pl-[11px]`}>図形ID： 102</div>
      <div className={`${CELL} w-[229px] pl-[15px]`}>
        <button aria-label="レイヤー" className="flex w-[54px] items-center gap-[6px]">
          <Icon w={22} h={20} stroke={1.500}><path d="M11 2l9 6-9 6-9-6zM2 12l9 6 9-6" strokeLinejoin="round" /></Icon>
          <Caret />
        </button>
        <button className="flex w-[124px] items-center gap-3 text-[13px]">
          <Icon w={16} h={18} stroke={1.500}><path d="M5 1H1v4M11 1h4v4M5 17H1v-4M11 17h4v-4M5 5h3.500L11 7.500V13H5z" /></Icon>
          全画面モード
        </button>
        <button aria-label="再生"><CirclePlay size={21} strokeWidth={1.3} /></button>
      </div>
      <div className={`${CELL} w-[276px] pl-[13px]`}>
        <button aria-label="縮小" className="w-7"><Minus size={16} strokeWidth={1.5} /></button>
        <input
          type="range"
          aria-label="ズーム"
          defaultValue={22}
          className="h-[3px] w-[122px] appearance-none rounded-full bg-[linear-gradient(to_right,#303135_25%,#ffffff_25%)] [&::-webkit-slider-thumb]:h-[15px] [&::-webkit-slider-thumb]:w-[15px] [&::-webkit-slider-thumb]:appearance-none [&::-webkit-slider-thumb]:rounded-full [&::-webkit-slider-thumb]:border-2 [&::-webkit-slider-thumb]:border-[#303135] [&::-webkit-slider-thumb]:bg-white"
        />
        <button aria-label="拡大" className="ml-[10px] w-[34px]"><Plus size={17} strokeWidth={1.5} /></button>
        <button className="flex items-center gap-2">100%<Caret /></button>
      </div>
      <div className={`${CELL} w-[99px] gap-[22px] pl-4`}>
        <button aria-label="画面に合わせる">
          <Icon w={18} h={18} stroke={1.500}><path d="M5 1H1v4M13 1h4v4M5 17H1v-4M13 17h4v-4M5.500 5.500h7v7h-7z" /></Icon>
        </button>
        <button aria-label="幅に合わせる">
          <Icon w={18} h={18} stroke={1.500}><path d="M1 1h16v16H1zM4 9h10M6 7L4 9l2 2M12 7l2 2-2 2" /></Icon>
        </button>
      </div>
    </div>
  </footer>
);

/* ---------- colour dialog ---------- */

const SwatchGrid = ({ colors }: { colors: string[] }) => (
  <div className="ml-[3px] grid w-[218px] grid-cols-8 gap-[6px]">
    {colors.map((color, i) => (
      <button key={i} aria-label={color} className="h-[18px] border border-[#6e6f72] p-px">
        <span className="block h-full" style={{ background: color }} />
      </button>
    ))}
  </div>
);

const FIELDS = [
  ['色相(E):', '42'], ['赤(R):', '255'],
  ['彩度(S):', '172'], ['緑(G):', '204'],
  ['明度(V):', '255'], ['青(U):', '83'],
];

const ColorDialog = () => (
  <div role="dialog" aria-label="色を選択" className="absolute left-[625px] top-[193px] w-[586px] border-[5px] border-[#dd2022] bg-white pb-[18px] text-[#1f1f22]">
    <div className="flex h-[52px] items-center pl-[17px] pr-[22px]">
      <Logo size={20} />
      <h2 className="ml-[6px] text-[15px] font-bold">色を選択</h2>
      <button aria-label="閉じる" className="ml-auto text-[#66676b]">
        <Icon w={15} h={15} stroke={1.200}><path d="M1 1l13 13M14 1L1 14" /></Icon>
      </button>
    </div>
    <div className="flex gap-[14px] pl-[21px]">
      <div className="w-[224px]">
        <p className="mt-5 h-[22px] text-[13px] leading-[22px]">基本カラー(B)</p>
        <div className="mt-2"><SwatchGrid colors={BASIC_COLORS} /></div>
        <p className="mt-[81px] h-[22px] text-[13px] leading-[22px]">カスタムカラー(C)</p>
        <div className="mt-[9px]"><SwatchGrid colors={CUSTOM_COLORS} /></div>
        <button className="mt-[10px] h-[31px] w-full rounded-md bg-[#0080ff] text-[13px] text-white">カスタムカラーに追加(A)</button>
      </div>
      <div className="pt-[29px]">
        <div className="flex h-[201px]">
          <div className="relative w-[221px] bg-[linear-gradient(to_bottom,#c8c8c800,#c8c8c8),linear-gradient(to_right,#c80000,#c800c8,#0000c8,#00c8c8,#00c800,#c8c800,#c80000)]">
            <span className="absolute left-[185px] top-[65px] h-[2px] w-5 bg-black" />
            <span className="absolute left-[194px] top-14 h-5 w-[2px] bg-black" />
          </div>
          <div className="ml-[18px] w-[14px] bg-gradient-to-b from-[#ffcc53] to-black" />
          <div className="relative ml-px w-[5px] bg-[#f0f0f1]">
            <svg width="6" height="10" viewBox="0 0 6 10" className="absolute left-0 top-[-4px]" aria-hidden="true">
              <path d="M0 5l6-5v10z" />
            </svg>
          </div>
        </div>
        <div className="mt-[26px] flex">
          <div className="h-[126px] w-[59px] bg-[#ffcc53]" />
          <div>
            <div className="grid grid-cols-[64px_61px_47px_62px] gap-y-[7px] text-[15px]">
              {FIELDS.map(([label, value], i) => (
                <React.Fragment key={label}>
                  <label htmlFor={`field${i}`} className="text-right leading-[25px]">{label}</label>
                  <Spinner id={`field${i}`} label={label} value={value} className={i % 2 ? 'ml-2 h-[25px]' : 'ml-[7px] h-[25px]'} />
                </React.Fragment>
              ))}
            </div>
            <div className="mt-[13px] flex text-sm">
              <label htmlFor="html" className="w-16 text-right text-[15px] leading-[25px]">HTML:</label>
              <input id="html" defaultValue="#ffcc53" className="ml-[7px] h-[25px] w-[129px] rounded border border-[#ededf1] pl-[6px] outline-none" />
            </div>
          </div>
        </div>
      </div>
    </div>
    <div className="mt-[14px] flex justify-end gap-[18px] pr-[17px]">
      <button className="h-8 w-[93px] rounded-md border border-dotted border-[#1c5fa8] bg-[#0080ff] text-sm text-white">OK</button>
      <button className="h-8 w-[93px] rounded-md bg-[#e9e9ef] text-xs">キャンセル</button>
    </div>
  </div>
);

export default function App() {
  return (
    <div className="relative flex h-screen flex-col overflow-hidden bg-white [font-family:'Open_Sans','Noto_Sans_CJK_JP',sans-serif]">
      <TitleBar />
      <MenuBar />
      <Ribbon />
      <div className="flex min-h-0 flex-1">
        <ShapeLibrary />
        <Workspace />
        <Properties />
      </div>
      <StatusBar />
      <ColorDialog />
    </div>
  );
}
